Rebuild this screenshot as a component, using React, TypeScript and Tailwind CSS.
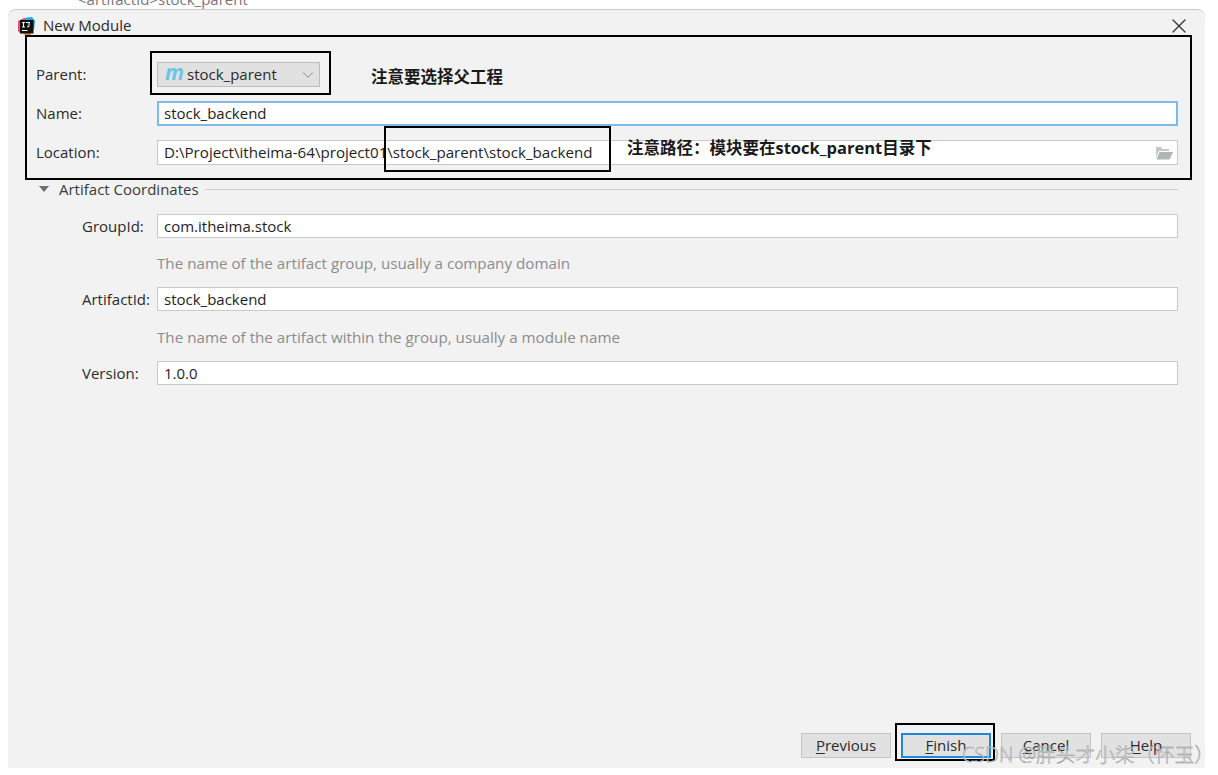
import React from "react";
import { ChevronDown, X } from "lucide-react";

const inputBase = "flex-1 flex items-center bg-white text-[#1e1e1e]";
const inputClass = `${inputBase} text-[15px] h-[25px] px-[6px] border border-[#c9c9c9]`;
const inputFocused = `${inputBase} text-[15px] h-[25px] px-[5px] border-2 border-[#7fbbe9]`;
const inputShort = `${inputBase} text-[15px] h-[24px] px-[6px] border border-[#c9c9c9]`;
const inputPath = `${inputBase} text-[15.15px] h-[25px] px-[6px] border border-[#c9c9c9]`;

function Field({
  label,
  value,
  labelClass,
  control,
}: {
  label: string;
  value: string;
  labelClass: string;
  control: string;
}) {
  return (
    <div className="flex items-center">
      <div className={`text-[15px] text-[#2b2b2b] ${labelClass}`}>{label}</div>
      <div className={control}>{value}</div>
    </div>
  );
}

function Hint({ children }: { children: string }) {
  return (
    <div className="h-full flex items-center pt-[2px] pl-[149px] text-[15.2px] text-[#8c8c8c]">{children}</div>
  );
}

function DialogButton({
  hot,
  rest,
  primary,
}: {
  hot: string;
  rest: string;
  primary?: boolean;
}) {
  return (
    <div
      className={
        primary
          ? "w-[90px] h-[25px] flex items-center justify-center bg-[#e1e1e1] border-2 border-[#1e88e0] text-[15px] text-[#2b2b2b]"
          : "w-[90px] h-[25px] flex items-center justify-center bg-[#e1e1e1] border border-[#c4c4c4] text-[15px] text-[#2b2b2b]"
      }
    >
      <span className="underline underline-offset-2">{hot}</span>
      {rest}
    </div>
  );
}

function IdeaLogo() {
  return (
    <svg width="18" height="18" viewBox="0 0 18 18" className="shrink-0">
      <path d="M1 4 L7 1 L10 4 L3 16 L1 14 Z" fill="#f0487a" />
      <path d="M7 1 L15 0 L18 4 L17 13 L13 8 Z" fill="#1aa6ea" />
      <path d="M2 13 L8 18 L14 18 L12 10 Z" fill="#f5803e" />
      <rect x="3" y="3" width="13.5" height="13.5" fill="#111" />
      <rect x="5" y="13" width="5.5" height="1" fill="#fff" />
      <rect x="5" y="5" width="3" height="1" fill="#fff" />
      <rect x="6" y="5" width="1" height="5" fill="#fff" />
      <rect x="5" y="9.5" width="3" height="1" fill="#fff" />
      <path d="M9 5.5 H13 M12 5.5 V9.5 L10 10" stroke="#fff" strokeWidth="1" fill="none" />
    </svg>
  );
}

export default function App() {
  return (
    <div
      className="relative w-[1218px] h-[775px] overflow-hidden bg-white pt-[9px] pl-[8px]"
      style={{ fontFamily: '"Open Sans", "Noto Sans CJK SC", sans-serif' }}
    >
      {/* bit of the window behind the dialog */}
      <div className="absolute left-[78px] -top-[12px] text-[15px] text-[#777] whitespace-nowrap">
        &lt;artifactId&gt;stock_parent
      </div>

      <div className="relative w-[1197px] h-[759px] flex flex-col rounded-t-[8px] bg-[#f2f2f2] border-t border-[#c8c8c8]">
        {/* title bar */}
        <div className="flex items-center h-[31px] pl-[9px] pr-[14px] shrink-0">
          <IdeaLogo />
          <div className="ml-[8px] text-[15px] text-[#2b2b2b]">New Module</div>
          <X className="ml-auto w-6 h-6 text-[#333]" strokeWidth={1.2} />
        </div>

        {/* module fields */}
        <div className="flex flex-col gap-[14px] pl-[28px] pr-[27px] pt-[21px]">
          <div className="flex items-center h-[25px]">
            <div className="w-[121px] text-[15px] text-[#2b2b2b]">Parent:</div>
            <div className="w-[163px] h-[25px] flex items-center pl-[7px] pr-[2px] bg-[#e1e1e1] border border-[#bdbdbd] text-[15px] text-[#2b2b2b]">
              <span className="w-[22px] font-bold italic text-[21px] leading-none text-[#6cc5e8] -mt-[4px]">
                m
              </span>
              {"stock_parent"}
              <ChevronDown className="ml-auto w-[18px] h-[18px] text-[#777]" strokeWidth={1.1} />
            </div>
          </div>
          <Field label="Name:" value="stock_backend" labelClass="w-[121px]" control={inputFocused} />
          <div className="flex items-center h-[25px]">
            <div className="w-[121px] text-[15px] text-[#2b2b2b]">Location:</div>
            <div className={inputPath}>
              D:\Project\itheima-64\project01\stock_parent\stock_backend
              <svg width="18" height="14" viewBox="0 0 18 14" className="ml-auto -mr-[2px]">
                <path d="M1 1 H6 L7.5 3 H14 V5 H4 L1 12 Z" fill="#c3c8c8" />
                <path d="M4.5 6 H18 L14.5 13.5 H1.5 Z" fill="#aeb5b5" />
              </svg>
            </div>
          </div>
        </div>

        {/* artifact coordinates */}
        <div className="flex items-center gap-[6px] mt-[13px] pl-[31px] pr-[27px] h-[22px]">
          <div className="w-0 h-0 border-x-[5px] border-x-transparent border-t-[6px] border-t-[#6f6f6f]" />
          <div className="ml-[4px] text-[15px] text-[#3a3a3a]">Artifact Coordinates</div>
          <div className="flex-1 h-px bg-[#cfcfcf]" />
        </div>
        <div className="flex flex-col pl-[74px] pr-[27px] pt-[14px]">
          <Field label="GroupId:" value="com.itheima.stock" labelClass="w-[75px]" control={inputShort} />
          <div className="-ml-[74px] h-[49px]">
            <Hint>The name of the artifact group, usually a company domain</Hint>
          </div>
          <Field label="ArtifactId:" value="stock_backend" labelClass="w-[75px]" control={inputShort} />
          <div className="-ml-[74px] h-[50px]">
            <Hint>The name of the artifact within the group, usually a module name</Hint>
          </div>
          <Field label="Version:" value="1.0.0" labelClass="w-[75px]" control={inputShort} />
        </div>

        {/* buttons */}
        <div className="mt-auto mb-[10px] flex justify-end gap-[10px] pr-[14px]">
          <DialogButton hot="P" rest="revious" />
          <DialogButton hot="F" rest="inish" primary />
          <DialogButton hot="C" rest="ancel" />
          <DialogButton hot="H" rest="elp" />
        </div>
      </div>

      {/* annotations drawn over the screenshot */}
      <div className="absolute left-[25px] top-[35px] w-[1167px] h-[145px] border-2 border-black" />
      <div className="absolute left-[150px] top-[51px] w-[181px] h-[44px] border-2 border-black" />
      <div className="absolute left-[384px] top-[126px] w-[227px] h-[46px] border-2 border-black" />
      <div className="absolute left-[895px] top-[723px] w-[100px] h-[38px] border-2 border-black" />
      <div className="absolute left-[371px] top-[67px] text-[16.5px] leading-[20px] font-bold text-[#1a1a1a]">
        注意要选择父工程
      </div>
      <div className="absolute left-[627px] top-[138px] text-[16.5px] leading-[20px] font-bold text-[#1a1a1a] whitespace-nowrap">
        注意路径：模块要在stock_parent目录下
      </div>
      <div className="absolute left-[962px] top-[743px] text-[19.8px] leading-[24px] font-light text-[#e6e6e6] whitespace-nowrap [-webkit-text-stroke:0.4px_#8c8c8c]">
        CSDN @胖头才小柒（怀玉）
      </div>
    </div>
  );
}
